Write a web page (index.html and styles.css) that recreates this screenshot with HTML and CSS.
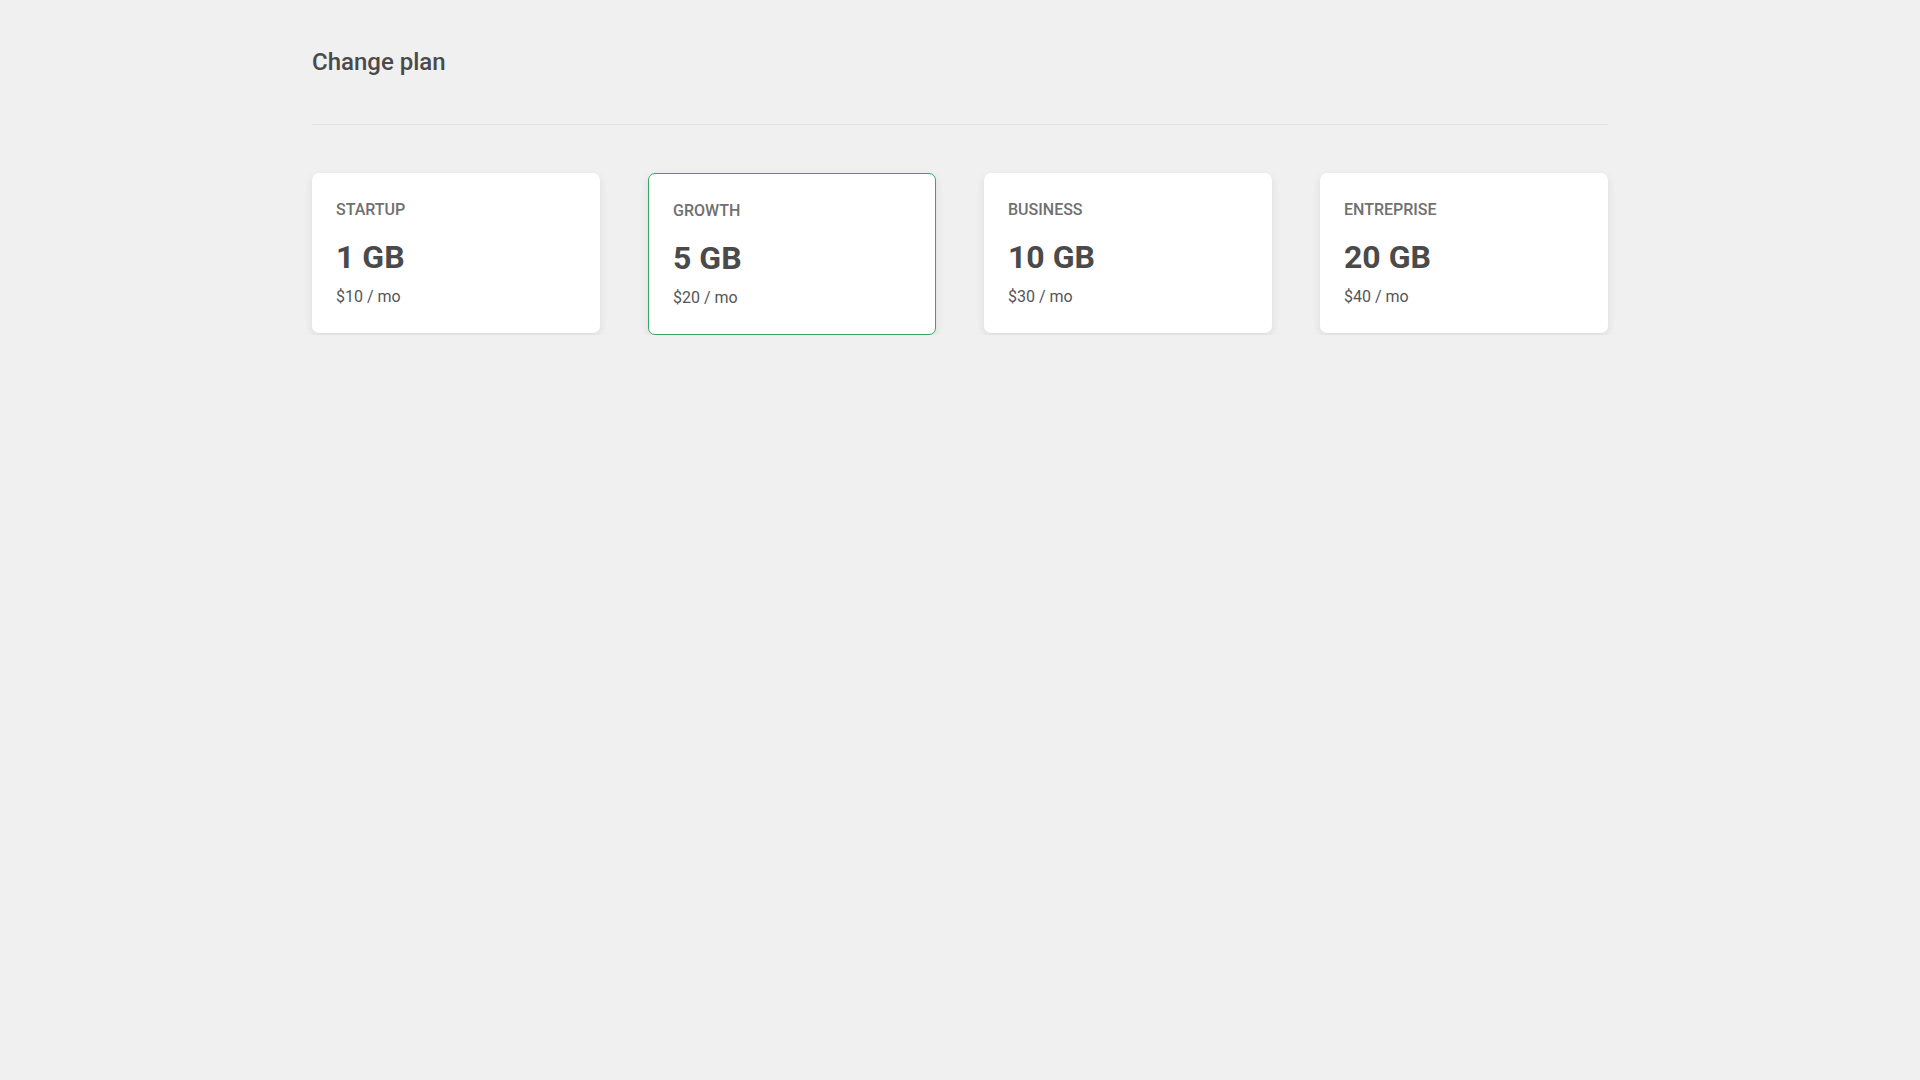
FILE: index.html
```html
<!DOCTYPE html>
<html>

<head>
	<title>Change plan</title>
	<link rel="stylesheet" href="styles.css">
</head>

<body>
	<div class="page">
		<h1 class="page-title">Change plan</h1>
		<hr class="divider">
		<div class="plans">
			<div class="plan">
				<p class="plan-name">STARTUP</p>
				<p class="plan-size">1 GB</p>
				<p class="plan-price">$10 / mo</p>
			</div>
			<div class="plan selected">
				<p class="plan-name">GROWTH</p>
				<p class="plan-size">5 GB</p>
				<p class="plan-price">$20 / mo</p>
			</div>
			<div class="plan">
				<p class="plan-name">BUSINESS</p>
				<p class="plan-size">10 GB</p>
				<p class="plan-price">$30 / mo</p>
			</div>
			<div class="plan">
				<p class="plan-name">ENTREPRISE</p>
				<p class="plan-size">20 GB</p>
				<p class="plan-price">$40 / mo</p>
			</div>
		</div>
	</div>
</body>

</html>
```

FILE: styles.css
```css
body {
	margin: 0;
	background: #f0f0f0;
	font-family: Roboto, "Noto Sans", sans-serif;
	color: #4a4a4a;
}

.page {
	max-width: 1296px;
	margin: 0 auto;
	padding-top: 48px;
}

.page-title {
	margin: 0;
	font-size: 24px;
	line-height: 28px;
	font-weight: 500;
	color: #4a4a4a;
}

.divider {
	margin: 48px 0;
	border: 0;
	height: 1px;
	background: #e3e3e3;
}

.plans {
	display: grid;
	grid-template-columns: repeat(4, 1fr);
	gap: 48px;
	align-items: start;
}

.plan {
	background: white;
	border-radius: 7px;
	padding: 25px 24px 24px;
	box-shadow: 0 3px 8px rgba(0, 0, 0, 0.09);
}

.plan.selected {
	border: 1px solid #37a765;
}

.plan p {
	margin: 0;
}

.plan-name {
	font-size: 16px;
	line-height: 24px;
	font-weight: 500;
	color: #707070;
}

.plan-size {
	margin-top: 15px !important;
	font-size: 32px;
	line-height: 40px;
	font-weight: 700;
	color: #4a4a4a;
}

.plan-price {
	margin-top: 8px !important;
	font-size: 16px;
	line-height: 24px;
	color: #555;
}
```
